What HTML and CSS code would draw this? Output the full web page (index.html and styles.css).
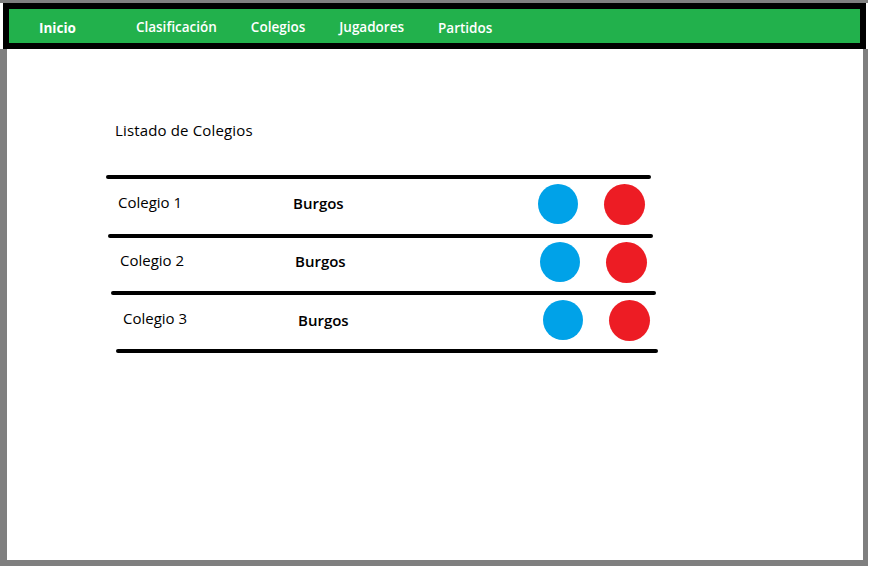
FILE: index.html
```html
<!DOCTYPE html>
<html lang="es">
<head>
<meta charset="utf-8">
<title>Listado de Colegios</title>
<link rel="stylesheet" href="styles.css">
</head>
<body>
<div class="frame">
  <nav class="nav">
    <a class="nav-item nav-home" href="#">Inicio</a>
    <a class="nav-item" href="#">Clasificación</a>
    <a class="nav-item" href="#">Colegios</a>
    <a class="nav-item" href="#">Jugadores</a>
    <a class="nav-item nav-last" href="#">Partidos</a>
  </nav>
  <main class="page">
    <h1 class="title">Listado de Colegios</h1>
    <div class="list">
      <div class="rule rule-1"></div>
      <div class="row row-1">
        <span class="name">Colegio 1</span>
        <span class="city">Burgos</span>
        <span class="btn btn-edit"></span>
        <span class="btn btn-delete"></span>
      </div>
      <div class="rule rule-2"></div>
      <div class="row row-2">
        <span class="name">Colegio 2</span>
        <span class="city">Burgos</span>
        <span class="btn btn-edit"></span>
        <span class="btn btn-delete"></span>
      </div>
      <div class="rule rule-3"></div>
      <div class="row row-3">
        <span class="name">Colegio 3</span>
        <span class="city">Burgos</span>
        <span class="btn btn-edit"></span>
        <span class="btn btn-delete"></span>
      </div>
      <div class="rule rule-4"></div>
    </div>
  </main>
</div>
</body>
</html>
```
FILE: styles.css
```css
html, body {
  margin: 0;
  padding: 0;
  background: #ffffff;
}

body {
  font-family: "Open Sans", "Noto Sans", sans-serif;
  color: #000;
}

.frame {
  width: 868px;
  height: 566px;
  box-sizing: border-box;
  border-top: 3px solid #7f7f7f;
  display: flex;
  flex-direction: column;
}

.nav {
  height: 46px;
  box-sizing: border-box;
  margin: 0 2px 0 3px;
  border: 6px solid #000;
  background: #22b14c;
  display: flex;
  align-items: flex-start;
  padding: 8px 0 0 30px;
  gap: 34px;
}

.nav-item {
  color: #fff;
  text-decoration: none;
  font-size: 13.5px;
  line-height: 20px;
  font-weight: 600;
}

.nav-home {
  font-weight: 700;
  margin-top: 1px;
  margin-right: 26px;
}

.nav-last {
  margin-top: 1px;
}

.page {
  flex: 1;
  border-left: 7px solid #7f7f7f;
  border-right: 5px solid #7f7f7f;
  border-bottom: 6px solid #7f7f7f;
  padding-top: 71px;
}

.title {
  margin: 0 0 35px 108px;
  font-size: 15px;
  line-height: 20px;
  font-weight: 400;
  letter-spacing: 0.15px;
}

.list {
  display: flex;
  flex-direction: column;
}

.rule {
  height: 4px;
  width: 545px;
  background: #000;
  border-radius: 2px;
}

.rule-1 { margin-left: 99px; }
.rule-2 { margin-left: 101px; }
.rule-3 { margin-left: 104px; }
.rule-4 { margin-left: 109px; width: 542px; }

.row {
  display: flex;
  align-items: flex-start;
  font-size: 15px;
  line-height: 20px;
}

.row-1 { height: 55px; margin-left: 111px; }
.row-2 { height: 53px; margin-left: 113px; }
.row-3 { height: 54px; margin-left: 116px; }

.name {
  width: 175px;
  flex: none;
}

.city {
  width: 245px;
  flex: none;
  font-weight: 600;
}

.btn {
  flex: none;
  border-radius: 50%;
}

.btn-edit {
  width: 40px;
  height: 40px;
  background: #00a2e8;
}

.btn-delete {
  width: 41px;
  height: 41px;
  margin-left: 26px;
  background: #ed1c24;
}

.row-1 .name { margin-top: 13px; }
.row-1 .city { margin-top: 14px; }
.row-1 .btn { margin-top: 5px; }

.row-2 .name { margin-top: 12px; }
.row-2 .city { margin-top: 13px; }
.row-2 .btn { margin-top: 4px; }

.row-3 .name { margin-top: 13px; }
.row-3 .city { margin-top: 15px; }
.row-3 .btn { margin-top: 5px; }
```
